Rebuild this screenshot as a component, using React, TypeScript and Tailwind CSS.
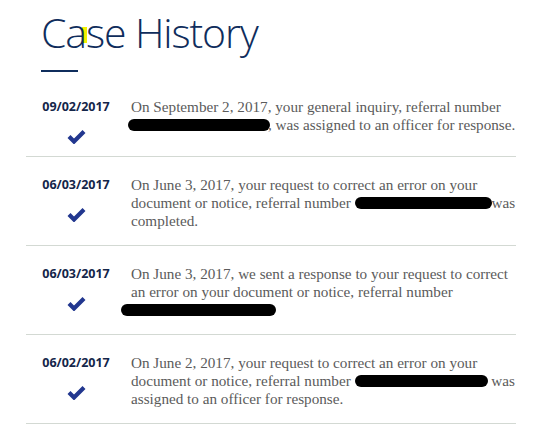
interface Entry {
  date: string;
  lines: React.ReactNode[];
}

const Redacted = ({ w, className = '' }: { w: number; className?: string }) => (
  <span
    className={`inline-block h-[12px] bg-black rounded-[6px] align-[-1px] ${className}`}
    style={{ width: w }}
  />
);

const Check = () => (
  <svg width="19" height="15" viewBox="0 0 19 15" className="text-[#22378f]">
    <path d="M2 7.5 L7 12.5 L17 2.5" fill="none" stroke="currentColor" strokeWidth="4.2" strokeLinecap="butt" strokeLinejoin="miter" />
  </svg>
);

const entries: Entry[] = [
  {
    date: '09/02/2017',
    lines: [
      'On September 2, 2017, your general inquiry, referral number',
      <>
        <Redacted w={142} className="-ml-[3px]" />
        <span className="-ml-[2px]">, was assigned to an officer for response.</span>
      </>,
    ],
  },
  {
    date: '06/03/2017',
    lines: [
      'On June 3, 2017, your request to correct an error on your',
      <>
        document or notice, referral number <Redacted w={137} className="rounded-[3px]" />was
      </>,
      'completed.',
    ],
  },
  {
    date: '06/03/2017',
    lines: [
      'On June 3, 2017, we sent a response to your request to correct',
      'an error on your document or notice, referral number',
      <Redacted w={155} className="-ml-[10px] rounded-[2px]" />,
    ],
  },
  {
    date: '06/02/2017',
    lines: [
      'On June 2, 2017, your request to correct an error on your',
      <>
        document or notice, referral number <Redacted w={133} className="rounded-[4px]" /> was
      </>,
      'assigned to an officer for response.',
    ],
  },
];

export default function App() {
  return (
    <div className="w-[558px] h-[444px] bg-white overflow-hidden pl-[26px]">
      <div className="w-[490px]">
        {/* heading */}
        <div className="pl-[15px] pt-[4px]">
          <h1 className="relative inline-block font-['Open_Sans',sans-serif] font-light text-[41px] leading-[56px] tracking-[-1.1px] text-[#0f2d5c]">
            <span className="absolute left-[41px] top-[23px] w-[5px] h-[16px] bg-[#f5f000]" />
            <span className="relative">Case History</span>
          </h1>
          <div className="mt-[10px] w-[37px] h-[2px] bg-[#0f2d5c]" />
        </div>

        <div className="mt-[7px]">
          {entries.map((e, i) => (
            <div key={i} className="flex border-b border-[#d3d9d3] pt-[19px] pb-[12px]">
              <div className="w-[100px] shrink-0 flex flex-col items-center">
                <div className="font-['Open_Sans',sans-serif] font-bold text-[12.5px] leading-[18px] text-[#14264a]">
                  {e.date}
                </div>
                <div className="mt-[13px]">
                  <Check />
                </div>
              </div>
              <div className="pl-[5px] pb-[3px] font-['Liberation_Serif',serif] text-[15.2px] leading-[18px] text-[#5b5b5b] whitespace-nowrap">
                {e.lines.map((l, j) => (
                  <div key={j}>{l}</div>
                ))}
              </div>
            </div>
          ))}
        </div>
      </div>
    </div>
  );
}
